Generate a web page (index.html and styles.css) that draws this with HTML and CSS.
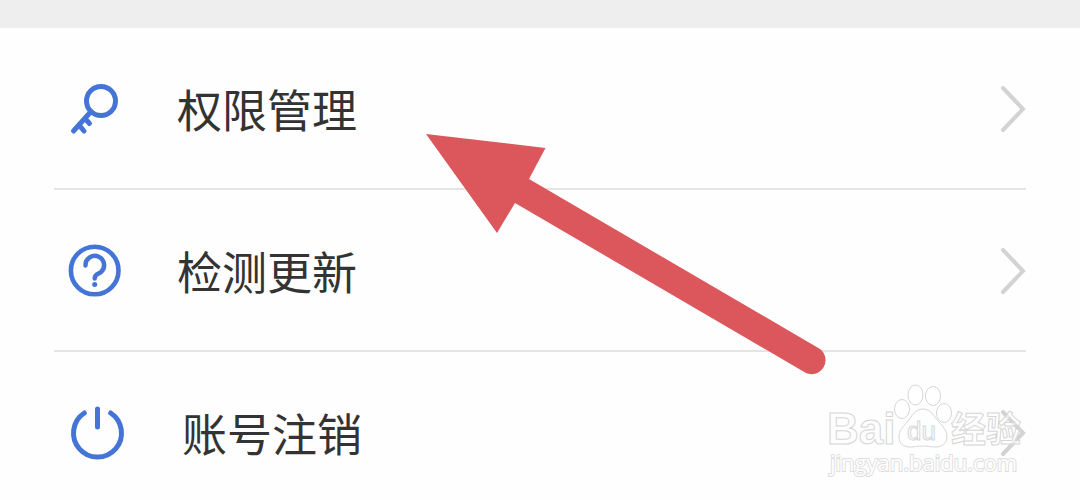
FILE: index.html
```html
<!DOCTYPE html>
<html lang="zh-CN">
<head>
<meta charset="utf-8">
<meta name="viewport" content="width=device-width, initial-scale=1">
<title>设置</title>
<link rel="stylesheet" href="styles.css">
</head>
<body>
<div class="screen">
  <div class="band"></div>
  <nav class="menu">
    <button class="row" type="button">
      <svg class="icon" viewBox="0 0 60 60" aria-hidden="true"><circle cx="35" cy="23" r="14.5"/><path d="M25 33.500 7.500 53M13 47l5 6M19 40.500l4.500 5"/></svg>
      <span class="label">权限管理</span>
      <svg class="chevron" viewBox="0 0 26 50" aria-hidden="true"><path d="M3 5 23 26 3 47"/></svg>
    </button>
    <button class="row" type="button">
      <svg class="icon" viewBox="0 0 60 60" aria-hidden="true"><circle cx="28.7" cy="30.5" r="23.800" stroke-width="4.600"/><path d="M19.500 25.500A9.300 9.300 0 1 1 34.500 32.500C31 34.500 28.700 34.500 28.700 38.500" stroke-width="4.500"/><circle class="dot" cx="28.700" cy="44.500" r="2.500"/></svg>
      <span class="label">检测更新</span>
      <svg class="chevron" viewBox="0 0 26 50" aria-hidden="true"><path d="M3 5 23 26 3 47"/></svg>
    </button>
    <button class="row row-account" type="button">
      <svg class="icon" viewBox="0 0 60 60" aria-hidden="true"><path d="M18.300 11a24 24 0 1 0 26.400 0M31.500 7v18"/></svg>
      <span class="label">账号注销</span>
      <svg class="chevron" viewBox="0 0 26 50" aria-hidden="true"><path d="M3 5 23 26 3 47"/></svg>
    </button>
  </nav>
  <svg class="arrow" viewBox="426 134 402 242" aria-hidden="true"><path d="M426 134 545.500 148 529 179 820 349A14 14 0 0 1 806 373L515 203 497 233Z"/></svg>
  <svg class="watermark" viewBox="0 0 200 110">
    <text class="brand" x="1" y="63">Bai</text>
    <ellipse cx="76" cy="28" rx="7.500" ry="9.500"/>
    <ellipse cx="89.500" cy="14" rx="7.500" ry="10"/>
    <ellipse cx="107" cy="15" rx="7.500" ry="9.500"/>
    <ellipse cx="118" cy="32" rx="7.500" ry="9.500"/>
    <path d="M97 28c-8 0-11 7-15 12-5 6-9 9-9 16 0 7 5 10 11 10 5 0 8-1 13-1s8 1 13 1c6 0 11-4 11-10 0-7-4-10-9-16-4-5-7-12-15-12z"/>
    <text class="du" x="81" y="59">du</text>
    <text class="cjk" x="125" y="61">经验</text>
    <text class="url" x="4" y="90">jingyan.baidu.com</text>
  </svg>
</div>
</body>
</html>
```
FILE: styles.css
```css
body {
  margin: 0;
  background: #fefefe;
  font-family: "Noto Sans CJK SC", sans-serif;
}

.screen {
  position: relative;
  height: 100vh;
  overflow: hidden;
}

.band {
  height: 28px;
  background: #eeeeee;
}

.menu {
  display: flex;
  flex-direction: column;
  padding: 0 54px;
}

.row {
  display: flex;
  align-items: center;
  gap: 51px;
  width: 100%;
  padding: 50px 0 50px 12px;
  border: 0;
  border-bottom: 2px solid #e4e4e4;
  background: none;
  color: #333333;
  font: inherit;
  text-align: left;
}

.row-account {
  gap: 56px;
}

.icon {
  width: 60px;
  height: 60px;
  fill: none;
  stroke: #4475d6;
  stroke-width: 5;
  stroke-linecap: round;
}

.icon .dot {
  fill: #4475d6;
  stroke: none;
}

.label {
  flex: 1;
  padding-top: 2px;
  font-size: 45px;
  line-height: 58px;
}

.chevron {
  width: 26px;
  height: 50px;
  fill: none;
  stroke: #d3d3d3;
  stroke-width: 4;
  stroke-linecap: round;
}

.arrow {
  position: absolute;
  left: 426px;
  top: 134px;
  width: 402px;
  fill: #db575c;
}

.watermark {
  position: absolute;
  left: 826px;
  top: 381px;
  width: 200px;
  fill: #ffffff;
  fill-opacity: 0.6;
  stroke: #d6d6d6;
  stroke-width: 1;
}

.watermark text {
  font-weight: 700;
}

.watermark .brand {
  font-family: "Liberation Sans", sans-serif;
  font-size: 44px;
}

.watermark .du {
  font-family: "Liberation Sans", sans-serif;
  font-size: 26px;
  font-weight: 400;
}

.watermark .cjk {
  font-family: "Noto Sans CJK SC", sans-serif;
  font-size: 35px;
}

.watermark .url {
  font-family: "Open Sans", sans-serif;
  font-size: 22px;
  font-weight: 400;
  fill-opacity: 1;
  paint-order: stroke;
  stroke: #dedede;
  stroke-width: 2;
}
```
